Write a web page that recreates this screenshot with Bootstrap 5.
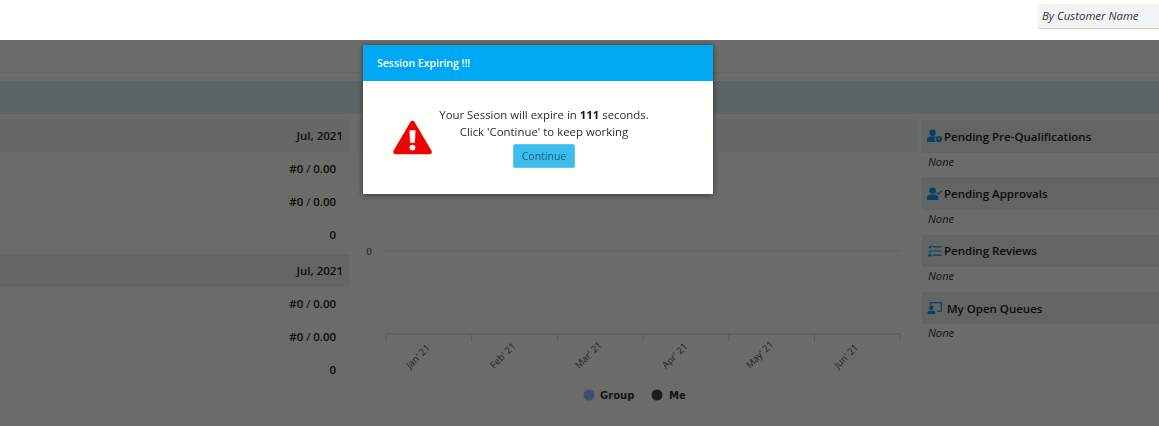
<!DOCTYPE html>
<html lang="en">
<head>
    <meta charset="UTF-8">
    <meta name="viewport" content="width=device-width, initial-scale=1.0">
    <title>Dashboard</title>
    <link href="https://cdn.jsdelivr.net/npm/bootstrap@5.3.0/dist/css/bootstrap.min.css" rel="stylesheet">
    <style>
        html, body { height: 426px; overflow: hidden; }
        body { font-family: "Open Sans", sans-serif; font-size: 11.4px; color: #222; background: #fffffb; }

        /* Top bar stays above the backdrop */
        .top-strip { height: 40px; background: #fffffb; position: relative; z-index: 1060; padding-top: 4px; }
        .customer-search {
            width: 130px; height: 24px; padding: 0 4px; margin-right: -9px; line-height: 23px;
            font-size: 11.4px; font-style: italic; color: #333; background: #f1f4f5;
            border: 0; border-radius: 3px 0 0 3px; box-shadow: 0 1px 1px #ccc;
        }

        .sub-strip { height: 33px; border-bottom: 1px solid #f2f2f0; }
        .title-band { height: 33px; margin-top: 8px; background: #dbf0ec; }
        .dash-body { padding-top: 5px; gap: 6px; }

        /* Left tables */
        .stats-col { width: 349px; flex: none; }
        .stats-head { height: 33px; padding-right: 6px; background: #f4f8f7; font-size: 11.5px; font-weight: 600; line-height: 34px; text-align: right; color: #1a1a1a; }
        .stats-head.is-second { margin-top: 3px; background: #eef3f2; }
        .stats-row { height: 33px; padding-right: 13px; line-height: 33.500px; font-size: 11.4px; font-weight: 600; text-align: right; border-bottom: 1px solid #f8f8f6; color: #1a1a1a; }
        .stats-row i { font-style: normal; font-weight: 400; }

        /* Chart */
        .chart-col { width: 562px; flex: none; height: 300px; border-left: 1px solid #fafaf8; }
        .chart-head { height: 33px; background: #f4f8f7; }
        .chart-svg { display: block; }
        .chart-svg text { font-family: "Open Sans", sans-serif; font-size: 9.5px; fill: #555; }
        .chart-svg .y-label { font-family: "DejaVu Serif", serif; font-size: 9.5px; }
        .chart-svg .legend-label { font-family: "DejaVu Sans", sans-serif; font-size: 10px; font-weight: 700; fill: #333; }

        /* Right panels */
        .queue-col { flex: 1; margin-left: -1px; padding-top: 1px; }
        .queue-head { height: 32.5px; padding-left: 5px; gap: 2px; background: #eaf0ef; font-size: 11.5px; font-weight: 600; color: #222; }
        .queue-none { height: 24.83px; padding-left: 6px; line-height: 18px; font-size: 11.2px; font-style: italic; color: #333; }
        .queue-icon { width: 15px; height: 14px; color: #0f9be6; flex: none; }
        .queue-icon-wide { margin-right: 3px; }

        /* Session dialog */
        .session-backdrop { position: fixed; top: 40px; left: 0; right: 0; bottom: 0; background: #000; opacity: .58; z-index: 1050; }
        .session-dialog { width: 350px; max-width: none; margin: 45px 0 0 363px; }
        .session-dialog .modal-content { height: 149px; border: 0; border-radius: 0; background: #fffffb; box-shadow: 0 1px 6px rgba(0,0,0,.5); }
        .session-dialog .modal-header { height: 36px; padding: 0 14px; border: 0; border-radius: 0; background: #00a8f4; }
        .session-title { font-size: 10.5px; font-weight: 600; color: #fff; margin: 0; line-height: 42px; }
        .session-body { padding: 0; height: 113px; }
        .session-alert { position: absolute; left: 30px; top: 39px; width: 39px; height: 35px; }
        .session-copy { width: 100%; padding: 25px 0 0 12px; text-align: center; font-size: 11.4px; line-height: 17.3px; color: #2b2b2b; margin: 0; }
        .session-copy b { font-weight: 700; color: #1a1a1a; }
        .session-btn {
            display: block; width: 62px; height: 24px; margin: 3px 0 0 150px; padding: 0; font-size: 10.5px; line-height: 22px;
            color: #11607f; background: #3cbdee; border: 1px solid #5cc8f0; border-radius: 2px;
        }
    </style>
</head>
<body>
    <div class="top-strip d-flex justify-content-end">
        <div class="form-control customer-search">By Customer Name</div>
    </div>

    <div class="sub-strip"></div>
    <div class="title-band"></div>

    <div class="dash-body d-flex">
        <div class="stats-col">
            <div class="stats-head">Jul, 2021</div>
            <div class="stats-row">#0 <i>/</i> 0.00</div>
            <div class="stats-row">#0 <i>/</i> 0.00</div>
            <div class="stats-row">0</div>
            <div class="stats-head is-second">Jul, 2021</div>
            <div class="stats-row">#0 <i>/</i> 0.00</div>
            <div class="stats-row">#0 <i>/</i> 0.00</div>
            <div class="stats-row">0</div>
        </div>

        <div class="chart-col">
            <div class="chart-head"></div>
            <svg class="chart-svg" width="562" height="270" viewBox="0 0 562 270">
                <line x1="30" y1="99" x2="544" y2="99" stroke="#e6e6e6"/>
                <text class="y-label" x="10" y="102.500">0</text>
                <path d="M30 190V182H544V190M115.700 182V190M201.400 182V190M287 182V190M372.700 182V190M458.400 182V190" fill="none" stroke="#ccd6eb"/>
                <text transform="translate(54 217) rotate(-45)">Jan' 21</text>
                <text transform="translate(138 217) rotate(-45)">Feb' 21</text>
                <text transform="translate(223 217) rotate(-45)">Mar' 21</text>
                <text transform="translate(310 217) rotate(-45)">Apr' 21</text>
                <text transform="translate(394 217) rotate(-45)">May' 21</text>
                <text transform="translate(482 217) rotate(-45)">Jun' 21</text>
                <circle cx="233" cy="243" r="5.500" fill="#8fc0f5"/>
                <text class="legend-label" x="244" y="247">Group</text>
                <circle cx="301" cy="243" r="5.500" fill="#434348"/>
                <text class="legend-label" x="313" y="247">Me</text>
            </svg>
        </div>

        <div class="queue-col">
            <div class="queue-head d-flex align-items-center">
                <svg class="queue-icon" viewBox="0 0 16 14" fill="currentColor"><circle cx="6" cy="3.500" r="3.400"/><path d="M0 13.500V11c0-2.400 2-3.500 4-3.500h4c.6 0 1 .1 1.500.3A4.200 4.200 0 0 0 9.300 13.500z"/><circle cx="12.700" cy="10.200" r="3.300"/><circle cx="12.700" cy="10.200" r="1.100" fill="#eaf0ef"/></svg>
                Pending Pre-Qualifications
            </div>
            <div class="queue-none">None</div>
            <div class="queue-head d-flex align-items-center">
                <svg class="queue-icon" viewBox="0 0 16 14" fill="currentColor"><circle cx="6" cy="3.500" r="3.400"/><path d="M0 13.500V11c0-2.400 2-3.500 4-3.500h4c2 0 4 1.100 4 3.500v2.500z"/><path d="M10.500 5.500l1.600 1.600 3.400-3.400" fill="none" stroke="currentColor" stroke-width="1.300"/></svg>
                Pending Approvals
            </div>
            <div class="queue-none">None</div>
            <div class="queue-head d-flex align-items-center">
                <svg class="queue-icon" viewBox="0 0 16 14" fill="none" stroke="currentColor" stroke-width="1.300"><path d="M6 2.500h9.500M6 7h9.500M6 11.500h9.500"/><path d="M2 2.500l1.200 1.200 2-2.400M2 7l1.200 1.200 2-2.400"/><circle cx="3" cy="11.500" r=".9" fill="currentColor"/></svg>
                Pending Reviews
            </div>
            <div class="queue-none">None</div>
            <div class="queue-head d-flex align-items-center">
                <svg class="queue-icon queue-icon-wide" viewBox="0 0 17 14" fill="currentColor"><circle cx="5" cy="6.800" r="2.500"/><path d="M.500 13.800v-1.500c0-1.600 1.300-2.300 2.500-2.300h4c1.200 0 2.500.7 2.500 2.300v1.500z"/><path d="M4 3.500V1h12.300v9.500h-5" fill="none" stroke="currentColor" stroke-width="1.400"/></svg>
                My Open Queues
            </div>
            <div class="queue-none">None</div>
        </div>
    </div>

    <div class="session-backdrop"></div>
    <div class="modal d-block" tabindex="-1" role="dialog">
        <div class="modal-dialog session-dialog">
            <div class="modal-content">
                <div class="modal-header">
                    <h5 class="session-title">Session Expiring !!!</h5>
                </div>
                <div class="modal-body session-body">
                    <svg class="session-alert" viewBox="0 0 39 35">
                        <path d="M19.500 3L36.500 32H2.500z" fill="#f00000" stroke="#f00000" stroke-width="4.500" stroke-linejoin="round"/>
                        <path d="M16.800 10.500h5.400l-.6 12h-4.200z" fill="#fffffb" stroke="#fffffb" stroke-width=".6" stroke-linejoin="round"/>
                        <circle cx="19.500" cy="27.600" r="2.900" fill="#fffffb"/>
                    </svg>
                    <p class="session-copy">Your Session will expire in <b>111</b> seconds.<br>Click 'Continue' to keep working</p>
                    <button type="button" class="btn session-btn">Continue</button>
                </div>
            </div>
        </div>
    </div>

    <script src="https://cdn.jsdelivr.net/npm/bootstrap@5.3.0/dist/js/bootstrap.bundle.min.js"></script>
</body>
</html>
